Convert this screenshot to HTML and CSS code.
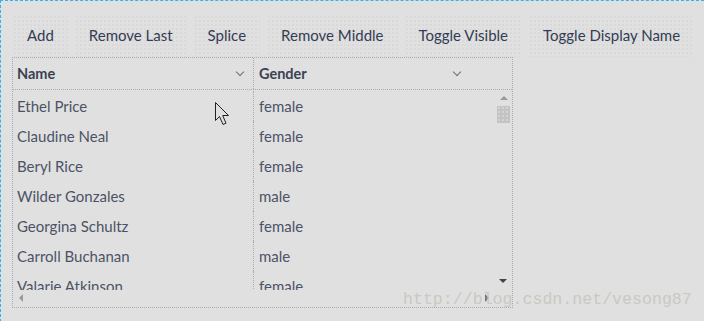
FILE: index.html
```html
<!DOCTYPE html>
<html lang="en">
<head>
    <meta charset="UTF-8">
    <title>Grid Columns</title>
    <link rel="stylesheet" href="styles.css">
</head>
<body>
    <div class="frame">
        <div class="toolbar">
            <button>Add</button>
            <button>Remove Last</button>
            <button>Splice</button>
            <button>Remove Middle</button>
            <button>Toggle Visible</button>
            <button>Toggle Display Name</button>
        </div>

        <!-- grid -->
        <div class="grid">
            <div class="grid-head">
                <div class="hcell name">Name <span class="chev"></span></div>
                <div class="hcell gender">Gender <span class="chev"></span></div>
            </div>
            <div class="grid-body">
                <div class="rows">
                    <div class="row"><div class="cell name">Ethel Price</div><div class="cell gender">female</div></div>
                    <div class="row"><div class="cell name">Claudine Neal</div><div class="cell gender">female</div></div>
                    <div class="row"><div class="cell name">Beryl Rice</div><div class="cell gender">female</div></div>
                    <div class="row"><div class="cell name">Wilder Gonzales</div><div class="cell gender">male</div></div>
                    <div class="row"><div class="cell name">Georgina Schultz</div><div class="cell gender">female</div></div>
                    <div class="row"><div class="cell name">Carroll Buchanan</div><div class="cell gender">male</div></div>
                    <div class="row"><div class="cell name">Valarie Atkinson</div><div class="cell gender">female</div></div>
                </div>
                <div class="vscroll">
                    <span class="arrow up"></span>
                    <span class="thumb"></span>
                    <span class="arrow down"></span>
                </div>
                <div class="hscroll">
                    <span class="arrow left"></span>
                    <span class="arrow right"></span>
                </div>
                <div class="corner"></div>
            </div>
        </div>

        <div class="watermark">http://blog.csdn.net/vesong87</div>

        <svg class="cursor" width="17" height="27" viewBox="0 0 17 27">
            <path d="M1.5 1.5 L1.5 19.5 L5.5 15.5 L9 23.5 L12 22.2 L8.7 14.5 L14.5 14.5 Z" fill="#e0e0e0" stroke="#222" stroke-width="1"/>
        </svg>
    </div>
</body>
</html>
```

FILE: styles.css
```css
body {
    margin: 0;
    background-color: #e0e0e0;
    font-family: Lato, 'Open Sans', sans-serif;
}
.frame {
    position: relative;
    height: 308px;
    padding: 13px 0 0 11px;
    border-top: 1px dashed #2fb5e6;
    border-left: 1px dashed #2fb5e6;
}
.toolbar {
    display: flex;
    gap: 6px;
}
.toolbar button {
    height: 43px;
    padding: 0 14px 1px 15px;
    border: none;
    background-color: #e0e0e0;
    background-image: radial-gradient(circle, #d0d0d0 0.6px, transparent 0.8px);
    background-size: 4px 4px;
    background-position: 1px 1px;
    font-family: Lato, 'Open Sans', sans-serif;
    font-size: 15px;
    color: #343c54;
}
.grid {
    width: 499px;
    border: 1px dotted #aaa;
}
.grid-head {
    display: flex;
    height: 31px;
    border-bottom: 1px dotted #aaa;
}
.hcell {
    display: flex;
    align-items: center;
    justify-content: space-between;
    font-weight: bold;
    font-size: 14.5px;
    color: #3a4252;
    box-sizing: border-box;
}
.hcell.name {
    width: 241px;
    padding: 0 10px 0 4px;
    border-right: 1px dotted #aaa;
}
.hcell.gender {
    width: 216px;
    padding: 0 10px 0 5px;
}
.chev {
    width: 5px;
    height: 5px;
    border-right: 1.2px solid #6b7080;
    border-bottom: 1.2px solid #6b7080;
    transform: rotate(45deg);
    margin-top: -4px;
}
.grid-body {
    display: grid;
    grid-template-columns: 483px 16px;
    grid-template-rows: 200px 17px;
}
.rows {
    overflow: hidden;
    padding-top: 1px;
}
.row {
    display: flex;
    height: 30px;
}
.cell {
    display: flex;
    align-items: center;
    font-size: 15px;
    color: #4c5366;
    box-sizing: border-box;
}
.cell.name {
    width: 241px;
    padding-left: 4px;
    border-right: 1px dotted #aaa;
}
.cell.gender {
    padding-left: 5px;
}
.vscroll {
    position: relative;
}
.thumb {
    position: absolute;
    left: 1px;
    top: 16px;
    width: 13px;
    height: 17px;
    background-color: #c3c3c3;
    background-image: radial-gradient(circle, #e6e6e6 0.6px, transparent 0.8px);
    background-size: 4px 4px;
}
.arrow {
    position: absolute;
    width: 0;
    height: 0;
}
.arrow.up {
    left: 4px;
    top: 6px;
    border-left: 4px solid transparent;
    border-right: 4px solid transparent;
    border-bottom: 4px solid #9a9a9a;
}
.arrow.down {
    left: 3px;
    top: 189px;
    border-left: 4px solid transparent;
    border-right: 4px solid transparent;
    border-top: 4px solid #444;
}
.hscroll {
    position: relative;
}
.arrow.left {
    left: 6px;
    top: 4px;
    border-top: 4px solid transparent;
    border-bottom: 4px solid transparent;
    border-right: 4px solid #9a9a9a;
}
.arrow.right {
    left: 472px;
    top: 4px;
    border-top: 4px solid transparent;
    border-bottom: 4px solid transparent;
    border-left: 4px solid #777;
}
.watermark {
    position: absolute;
    left: 402px;
    top: 289px;
    font-family: 'Liberation Mono', monospace;
    font-size: 16.6px;
    color: #c9c9c3;
}
.cursor {
    position: absolute;
    left: 213px;
    top: 100px;
}
```
